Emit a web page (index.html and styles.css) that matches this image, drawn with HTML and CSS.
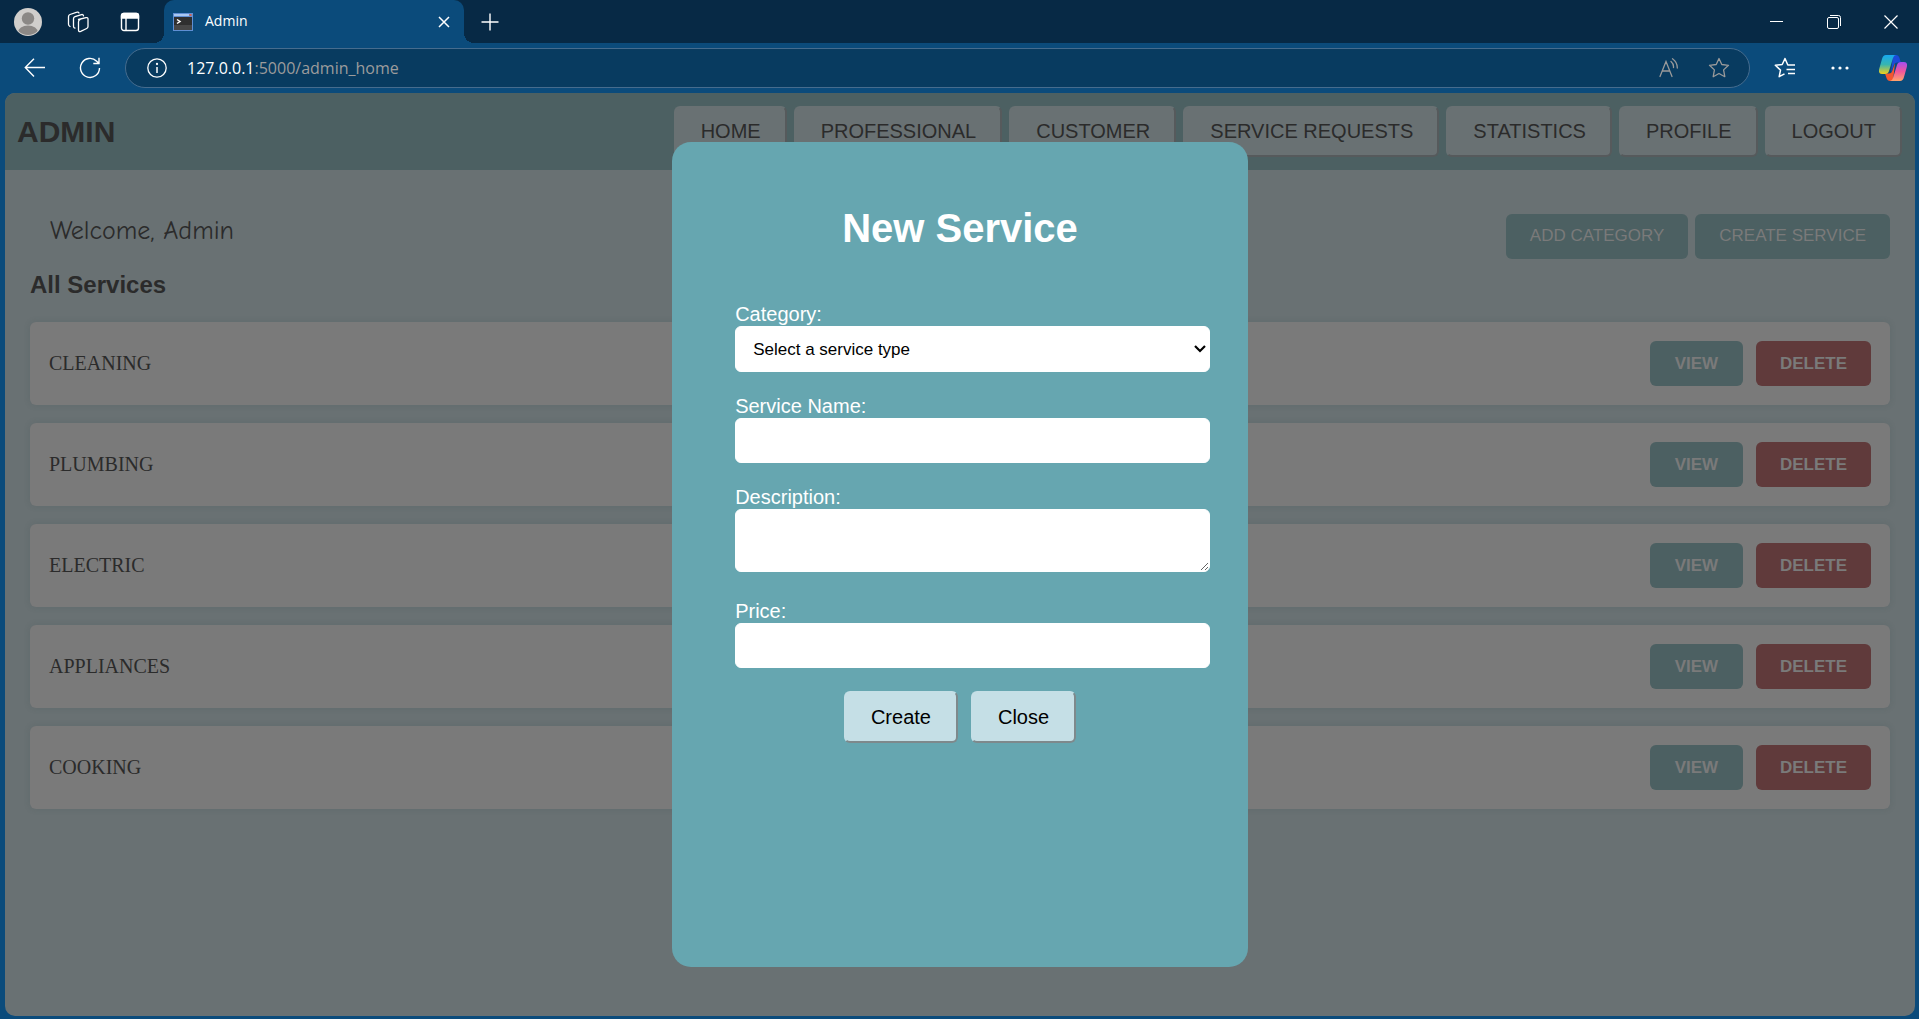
FILE: index.html
```html
<!DOCTYPE html>
<html lang="en">
<head>
<meta charset="utf-8">
<title>Admin</title>
<link rel="stylesheet" href="styles.css">
</head>
<body>
<div class="tabbar">
  <button class="icon-btn profile-btn" aria-label="Profile">
    <svg width="28" height="28" viewBox="0 0 28 28"><defs><clipPath id="face"><circle cx="14" cy="14" r="13"/></clipPath></defs><circle cx="14" cy="14" r="14" fill="#d0cecc"/><g clip-path="url(#face)" fill="#8b8886"><circle cx="14" cy="10.500" r="6.200"/><ellipse cx="14" cy="24.500" rx="10" ry="7"/></g></svg>
  </button>
  <button class="icon-btn workspaces-btn" aria-label="Workspaces">
    <svg width="22" height="22" viewBox="0 0 22 22" fill="none" stroke="currentColor" stroke-width="1.300" stroke-linejoin="round" stroke-linecap="round"><path d="M11.500 8.500 19 6.600q2-.4 2 1.400v7.500q0 1.500-1.300 2l-6 2.800q-2.200.8-2.200-1.300v-8q0-1.800 1.500-2.300Z"/><path d="M16.500 4.800q-.3-1.600-2-1.200L8 5.700q-1.500.5-1.500 2v7.500q0 1.600 1.500 2"/><path d="M12 2q-.6-1.300-2-.8L3 3.500q-1.500.6-1.500 2.200v7.600q0 1.400 1.500 2.200"/></svg>
  </button>
  <button class="icon-btn tabmenu-btn" aria-label="Tab actions">
    <svg width="20" height="20" viewBox="0 0 20 20" fill="none" stroke="currentColor" stroke-width="1.400"><rect x="1.500" y="1.500" width="17" height="17" rx="2.500"/><path d="M1.500 3.500q0-2 2-2h13q2 0 2 2V6h-17Z" fill="currentColor"/><path d="M6 6v12.500"/></svg>
  </button>
  <div class="tab">
    <svg width="20" height="18" viewBox="0 0 20 18"><rect width="20" height="18" fill="#5f8fd4"/><rect x="1" y="1" width="15" height="2" fill="#a9c8f2"/><rect x="16.500" y="1" width="2" height="2" fill="#d8644e"/><rect x="1" y="4" width="18" height="13" fill="#2f2f2f"/><rect x="1" y="12" width="18" height="5" fill="#474747"/><path d="m4 6.500 3 2-3 2" fill="none" stroke="#fff" stroke-width="1.500"/></svg>
    <span class="tab-title">Admin</span>
    <button class="icon-btn tab-close" aria-label="Close tab">
      <svg width="12" height="12" viewBox="0 0 12 12" stroke="currentColor" stroke-width="1.500"><path d="m1 1 10 10M11 1 1 11"/></svg>
    </button>
  </div>
  <button class="icon-btn newtab-btn" aria-label="New tab">
    <svg width="18" height="18" viewBox="0 0 18 18" stroke="currentColor" stroke-width="1.400"><path d="M9 .500v17M.500 9h17"/></svg>
  </button>
  <div class="window-controls">
    <button class="icon-btn" aria-label="Minimize"><svg width="13" height="13" viewBox="0 0 13 13" stroke="currentColor"><path d="M0 6.500h13"/></svg></button>
    <button class="icon-btn" aria-label="Restore"><svg width="14" height="14" viewBox="0 0 14 14" fill="none" stroke="currentColor"><rect x=".5" y="2.500" width="11" height="11" rx="1.500"/><path d="M3 .500h8.500q2 0 2 2V11"/></svg></button>
    <button class="icon-btn" aria-label="Close window"><svg width="14" height="14" viewBox="0 0 14 14" stroke="currentColor" stroke-width="1.200"><path d="m.5.500 13 13M13.500.500l-13 13"/></svg></button>
  </div>
</div>
<div class="toolbar">
  <button class="icon-btn" aria-label="Back"><svg width="22" height="20" viewBox="0 0 22 20" fill="none" stroke="currentColor" stroke-width="1.400"><path d="M21 9.500H1.500M10 .800 1.300 9.500l8.700 9"/></svg></button>
  <button class="icon-btn" aria-label="Refresh"><svg width="22" height="22" viewBox="0 0 22 22" fill="none" stroke="currentColor" stroke-width="1.400"><path d="M20.500 11A9.500 9.500 0 1 1 17.700 4.200L19.800 6.300M20 .800v5.700h-5.700"/></svg></button>
  <div class="address">
    <svg width="20" height="20" viewBox="0 0 20 20" fill="none" stroke="currentColor" stroke-width="1.300"><circle cx="10" cy="10" r="9.200"/><path d="M10 9v6" stroke-width="1.500"/><circle cx="10" cy="6" r=".5"/></svg>
    <div class="url" role="textbox" aria-label="Address" contenteditable="true" spellcheck="false"><span class="host">127.0.0.1</span>:5000/admin_home</div>
    <button class="icon-btn muted" aria-label="Read aloud"><svg width="20" height="20" viewBox="0 0 20 20" fill="none" stroke="currentColor" stroke-width="1.300" stroke-linecap="round"><path d="m1 18.500 6-15 6 15M3.200 13h7.600M12 3.500a7 7 0 0 1 2.500 6M13.500.800a11 11 0 0 1 4.800 9.200"/></svg></button>
    <button class="icon-btn muted" aria-label="Add to favorites"><svg width="22" height="22" viewBox="0 0 22 22" fill="none" stroke="currentColor" stroke-width="1.300" stroke-linejoin="round"><path d="m11 1.500 2.800 6 6.700.8-4.900 4.600 1.200 6.800-5.800-3.200-5.800 3.200 1.200-6.800L1.500 8.300l6.700-.8Z"/></svg></button>
  </div>
  <button class="icon-btn" aria-label="Favorites"><svg width="22" height="22" viewBox="0 0 22 22" fill="none" stroke="currentColor" stroke-width="1.500" stroke-linejoin="round"><path d="M20 8h-6.200L11 1.500 8.200 7.500l-6.900.8 5.200 4.800-1.300 6.600 5.300-2.900M12.500 12.500H21M14 8h7M14 16.500h7"/></svg></button>
  <button class="icon-btn" aria-label="Settings and more"><svg width="18" height="4" viewBox="0 0 18 4" fill="currentColor"><circle cx="2" cy="2" r="1.600"/><circle cx="9" cy="2" r="1.600"/><circle cx="16" cy="2" r="1.600"/></svg></button>
  <button class="icon-btn copilot-btn" aria-label="Copilot">
    <svg width="28" height="26" viewBox="0 0 28 26"><defs><linearGradient id="ca" x1="0" y1="0" x2="0" y2="1"><stop offset="0" stop-color="#16a8f0"/><stop offset=".5" stop-color="#37b5b0"/><stop offset="1" stop-color="#f2d019"/></linearGradient><linearGradient id="cb" x1="0" y1="0" x2="0" y2="1"><stop offset="0" stop-color="#a24ef0"/><stop offset=".5" stop-color="#f0569c"/><stop offset="1" stop-color="#ffa46b"/></linearGradient></defs><path d="M14 0h3q2.500 0 3.500 3l1.300 4.500H18q-2.500 0-3.200 2.500L12 18Z" fill="#1b4bd8"/><path d="M14 26h-3q-2.500 0-3.500-3L6 18.500h4q2.500 0 3.200-2.500L16 8Z" fill="#f4572f"/><path d="M7 0h10q-2.200 0-3 3l-4 13q-.8 3-4 3H3q-4.200 0-2.700-5.500L3 4q1-4 4-4Z" fill="url(#ca)"/><path d="M21 26H11q2.200 0 3-3l4-13q.8-3 4-3h3q4.200 0 2.700 5.500L25 22q-1 4-4 4Z" fill="url(#cb)"/></svg>
  </button>
</div>

<div class="page">
  <header class="site-header">
    <h1 class="brand">ADMIN</h1>
    <nav class="site-nav">
      <button class="raised">HOME</button>
      <button class="raised">PROFESSIONAL</button>
      <button class="raised">CUSTOMER</button>
      <button class="raised">SERVICE REQUESTS</button>
      <button class="raised">STATISTICS</button>
      <button class="raised">PROFILE</button>
      <button class="raised">LOGOUT</button>
    </nav>
  </header>
  <main class="content">
    <div class="intro">
      <p class="welcome">Welcome, Admin</p>
      <div class="intro-actions">
        <button class="action">ADD CATEGORY</button>
        <button class="action">CREATE SERVICE</button>
      </div>
    </div>
    <h2 class="section-title">All Services</h2>
    <ul class="services">
      <li class="service"><span>CLEANING</span><div class="service-actions"><button class="action strong">VIEW</button><button class="action strong danger">DELETE</button></div></li>
      <li class="service"><span>PLUMBING</span><div class="service-actions"><button class="action strong">VIEW</button><button class="action strong danger">DELETE</button></div></li>
      <li class="service"><span>ELECTRIC</span><div class="service-actions"><button class="action strong">VIEW</button><button class="action strong danger">DELETE</button></div></li>
      <li class="service"><span>APPLIANCES</span><div class="service-actions"><button class="action strong">VIEW</button><button class="action strong danger">DELETE</button></div></li>
      <li class="service"><span>COOKING</span><div class="service-actions"><button class="action strong">VIEW</button><button class="action strong danger">DELETE</button></div></li>
    </ul>
  </main>
  <div class="overlay">
    <form class="modal" role="dialog" aria-labelledby="modal-title">
      <h2 class="modal-title" id="modal-title">New Service</h2>
      <div class="fields">
        <div class="field"><label for="category">Category:</label><select id="category"><option>Select a service type</option><option>Cleaning</option><option>Plumbing</option></select></div>
        <div class="field"><label for="name">Service Name:</label><input id="name" type="text"></div>
        <div class="field field-tall"><label for="description">Description:</label><textarea id="description"></textarea></div>
        <div class="field"><label for="price">Price:</label><input id="price" type="text"></div>
      </div>
      <div class="modal-actions">
        <button class="raised light" type="submit">Create</button>
        <button class="raised light" type="button">Close</button>
      </div>
    </form>
  </div>
</div>
</body>
</html>
```
FILE: styles.css
```css
* { box-sizing: border-box; }

body {
  margin: 0;
  min-height: 100vh;
  display: flex;
  flex-direction: column;
  background: #0b4b7b;
  color: #2b2b2b;
  font-family: "Liberation Sans", Arial, sans-serif;
}

button { margin: 0; border: 0; font-family: inherit; color: inherit; white-space: nowrap; }

/* Browser frame */
.tabbar, .toolbar { display: flex; color: #fff; font-family: "Open Sans", "Segoe UI", sans-serif; }
.tabbar { height: 43px; background: #072945; }
.toolbar { height: 50px; align-items: center; padding: 0 1px 0 7px; }
.icon-btn {
  display: flex;
  align-items: center;
  justify-content: center;
  flex: none;
  width: 55px;
  height: 40px;
  padding: 0;
  background: none;
}
.tabbar .icon-btn { height: 43px; }
.profile-btn { width: 56px; }
.tabbar .workspaces-btn { width: 44px; }
.tabbar .tabmenu-btn { width: 60px; }
.tabbar .newtab-btn { width: 52px; }
.tab {
  position: relative;
  display: flex;
  align-items: center;
  width: 300px;
  margin-left: 4px;
  padding: 0 0 0 9px;
  border-radius: 10px 10px 0 0;
  background: #0b4b7b;
}
.tab::before, .tab::after {
  content: "";
  position: absolute;
  bottom: 0;
  width: 10px;
  height: 10px;
}
.tab::before { right: 100%; background: radial-gradient(circle at 0 0, #072945 10px, #0b4b7b 10px); }
.tab::after { left: 100%; background: radial-gradient(circle at 100% 0, #072945 10px, #0b4b7b 10px); }
.tab-title { flex: 1; margin-left: 12px; padding-bottom: 2px; font-size: 14px; line-height: 20px; }
.tab .tab-close { width: 40px; }
.window-controls { display: flex; margin-left: auto; }
.window-controls .icon-btn { width: 57px; }
.address {
  flex: 1;
  display: flex;
  align-items: center;
  height: 40px;
  margin: 0 7px 0 8px;
  padding: 0 5px 0 21px;
  border: 1px solid #466c8e;
  border-radius: 20px;
  background: #083b60;
}
.url { flex: 1; margin-left: 20px; font-size: 16px; line-height: 24px; color: #9c9c9c; outline: 0; }
.host { color: #fff; }
.address .icon-btn { width: 50px; height: 38px; }
.muted { color: #9a9a9a; }
.toolbar .copilot-btn { width: 51px; }

/* Page */
.page {
  position: relative;
  flex: 1;
  margin: 0 4px 3px 5px;
  border-radius: 10px;
  overflow: hidden;
  background: #697173;
}
.site-header {
  display: flex;
  align-items: center;
  justify-content: space-between;
  padding: 13px 13px 13px 12px;
  background: #4c6062;
}
.brand { margin: 0; font-size: 30px; line-height: 34px; }
.site-nav { display: flex; gap: 7px; }
.raised {
  padding: 12px 24px 12px 25px;
  border: 2px solid;
  border-color: #697173 #565a5c #565a5c #697173;
  border-radius: 6px;
  background: #697173;
  font-size: 20px;
  line-height: 23px;
}
.content { padding: 44px 25px; }
.intro { display: flex; align-items: flex-start; justify-content: space-between; }
.welcome {
  margin: 0 0 0 20px;
  font-family: "Comic Sans MS", "Comic Neue", Lato, cursive;
  font-size: 26px;
  line-height: 34px;
}
.intro-actions { display: flex; gap: 7px; }
.action {
  height: 45px;
  min-width: 93px;
  padding: 0 24px;
  border-radius: 6px;
  background: #4c6062;
  color: #7a7a7a;
  font-size: 17px;
  line-height: 19px;
}
.intro-actions .action { padding-bottom: 2px; }
.strong { font-weight: bold; }
.danger { background: #603a3b; }
.section-title { margin: 12px 0 23px; font-size: 24px; line-height: 28px; }
.services { display: flex; flex-direction: column; gap: 18px; margin: 0; padding: 0; list-style: none; }
.service {
  display: flex;
  align-items: center;
  justify-content: space-between;
  padding: 19px;
  border-radius: 6px;
  background: #7a7a7a;
  box-shadow: 0 0 6px rgba(60, 80, 80, 0.2);
  font: 20px/23px "Liberation Serif", "Times New Roman", serif;
}
.service-actions { display: flex; gap: 13px; font-family: "Liberation Sans", Arial, sans-serif; }

/* New service dialog */
.overlay {
  position: absolute;
  inset: 0;
  display: grid;
  justify-content: center;
  padding: 49px 0;
}
.modal { width: 30vw; padding-top: 63px; border-radius: 19px; background: #66a6b0; color: #fff; }
.modal-title { margin: 0 0 52px; font-size: 40px; line-height: 46px; text-align: center; }
.fields { display: flex; flex-direction: column; gap: 23px; padding: 0 38px 0 63px; }
.field { display: flex; flex-direction: column; font-size: 20px; line-height: 23px; }
.field-tall { margin-bottom: 5px; }
.field input, .field select, .field textarea {
  width: 100%;
  height: 45px;
  margin: 0;
  padding: 0 13px;
  border: 1px solid #fff;
  border-radius: 6px;
  background: #fff;
  color: #000;
  font: 17px/19px "Liberation Sans", Arial, sans-serif;
}
.field select {
  appearance: none;
  height: 46px;
  padding: 0 17px;
  background: #fff url("data:image/svg+xml,%3Csvg xmlns='http://www.w3.org/2000/svg' width='12' height='8' fill='none' stroke='black' stroke-width='2.200'%3E%3Cpath d='m1 1 5 5 5-5'/%3E%3C/svg%3E") no-repeat right 3px center;
}
.field textarea { height: 63px; padding: 12px 16px; }
.modal-actions { display: flex; justify-content: center; gap: 13px; margin-top: 23px; }
.light {
  padding: 12px 25px;
  border-color: #c5dfe6 #7e898c #7e898c #c5dfe6;
  background: #c5dfe6;
  color: #000;
  line-height: 24px;
}
```
